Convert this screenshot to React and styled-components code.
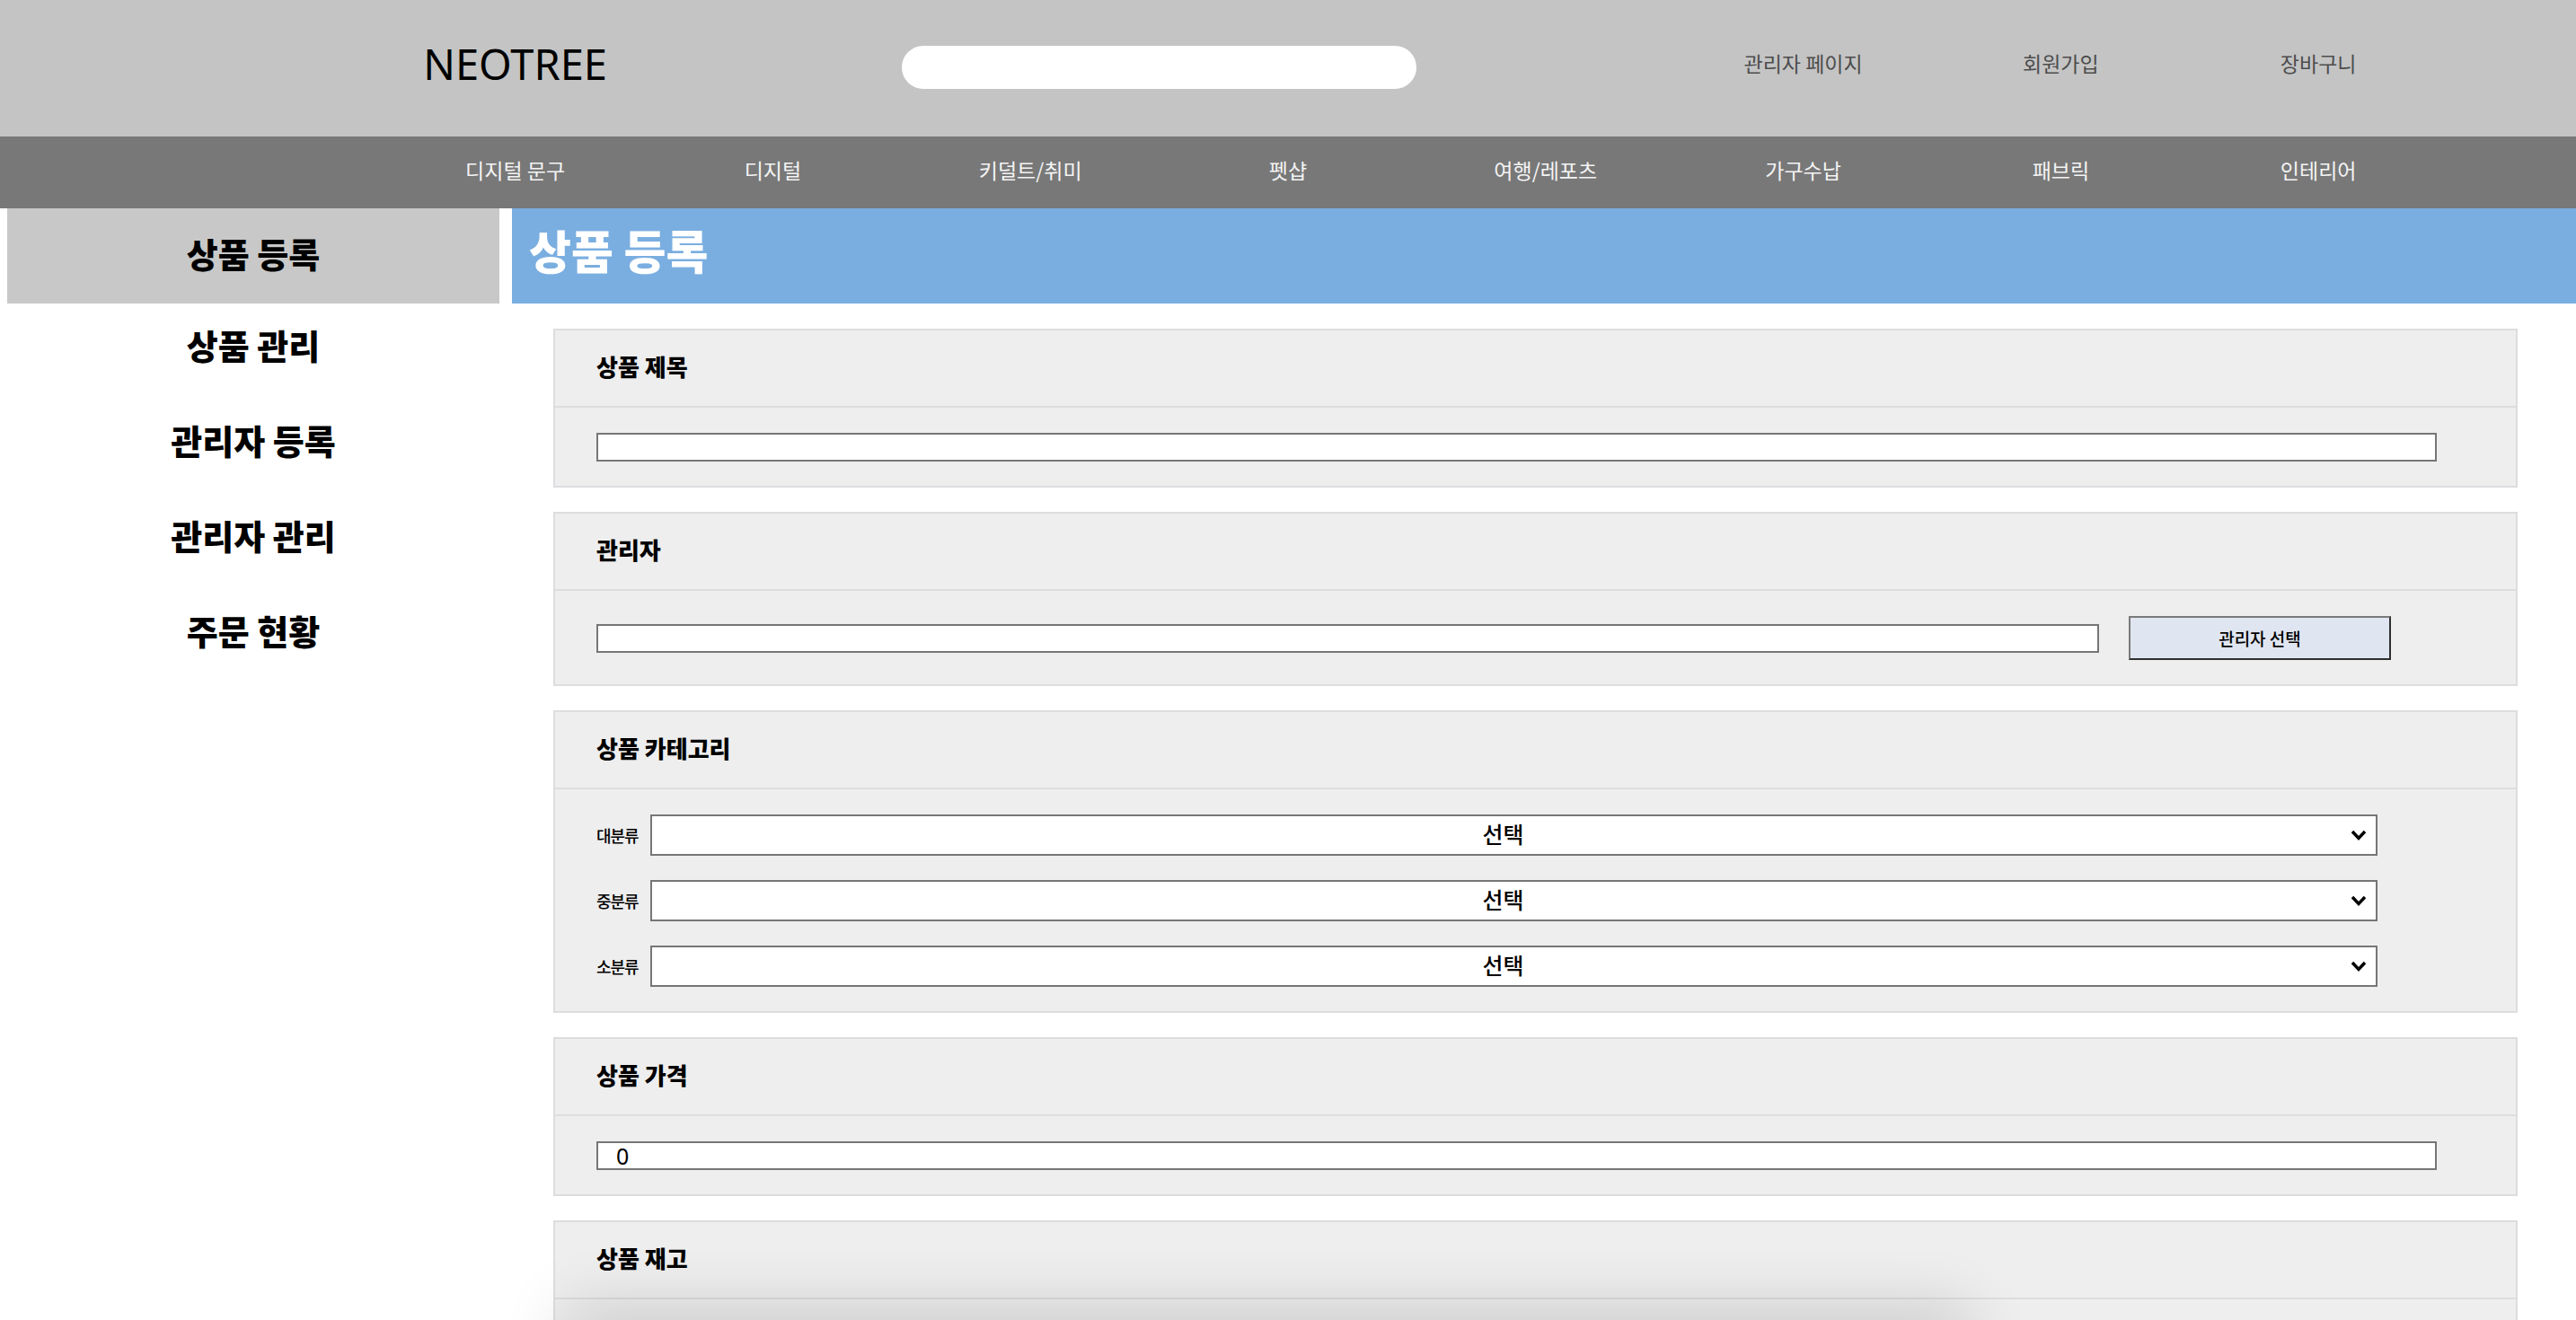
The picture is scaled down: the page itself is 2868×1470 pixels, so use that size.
import React from 'react'
import styled, { createGlobalStyle } from 'styled-components'

const GlobalStyle = createGlobalStyle`
  html, body {
    margin: 0;
    padding: 0;
    scrollbar-width: none;
  }
  body::-webkit-scrollbar {
    display: none;
  }
  body {
    font-family: "Noto Sans CJK KR", "Noto Sans", sans-serif;
    color: #000;
    background: #fff;
  }
  * {
    box-sizing: border-box;
  }
`;

const Header = styled.header`
  height: 152px;
  background: #c4c4c4;
  display: grid;
  grid-template-columns: 15% repeat(8, 10%);
  align-items: center;
`;

const Logo = styled.div`
  grid-column: 2;
  text-align: center;
  font-family: "Noto Sans", sans-serif;
  font-size: 47px;
  color: #000;
  margin-top: -10px;
`;

const Search = styled.input`
  grid-column: 4 / span 2;
  height: 48px;
  border: none;
  border-radius: 24px;
  background: #fff;
  outline: none;
  margin-top: -2px;
`;

const HeaderLink = styled.a`
  grid-column: ${props => props.col};
  text-align: center;
  font-size: 23px;
  color: #4d4d4d;
  text-decoration: none;
  margin-top: -12px;
`;

const Nav = styled.nav`
  height: 80px;
  background: #787878;
  display: grid;
  grid-template-columns: 15% repeat(8, 10%);
  align-items: center;
`;

const NavItem = styled.a`
  grid-column: ${props => props.col};
  text-align: center;
  font-size: 23px;
  color: #f4f4f4;
  text-decoration: none;
  margin-top: -6px;
`;

const Body = styled.div`
  display: flex;
  gap: 14px;
  padding-left: 8px;
`;

const Sidebar = styled.aside`
  width: 548px;
  flex-shrink: 0;
  display: flex;
  flex-direction: column;
`;

const SideItem = styled.a`
  height: 106px;
  display: flex;
  align-items: center;
  justify-content: center;
  font-size: 38px;
  font-weight: 800;
  color: #000;
  text-decoration: none;
  background: ${props => (props.active ? '#c8c8c8' : 'transparent')};
  padding-bottom: ${props => (props.active ? '8px' : '16px')};
`;

const Main = styled.main`
  flex: 1;
  min-width: 0;
`;

const TitleBar = styled.div`
  height: 106px;
  background: #7aaee0;
  display: flex;
  align-items: center;
  padding: 0 0 14px 19px;
`;

const Title = styled.h1`
  margin: 0;
  font-size: 51px;
  font-weight: 800;
  color: #fff;
`;

const Form = styled.form`
  display: flex;
  flex-direction: column;
  gap: 27px;
  padding: 28px 0 0 46px;
  width: 2233px;
`;

const Card = styled.section`
  background: #eeeeee;
  border: 2px solid #dddde0;
`;

const CardHead = styled.div`
  height: 86px;
  border-bottom: 2px solid #dddde0;
  display: flex;
  align-items: center;
  padding: 0 0 6px 46px;
  font-size: 26px;
  font-weight: 800;
`;

const CardBody = styled.div`
  display: flex;
  flex-direction: ${props => (props.column ? 'column' : 'row')};
  align-items: ${props => (props.column ? 'stretch' : 'center')};
  gap: ${props => props.gap || '0px'};
  padding: 28px ${props => props.right || '88px'} 27px 46px;
`;

const TextInput = styled.input`
  flex: 1;
  height: 32px;
  border: 2px solid #767676;
  background: #fff;
  padding: 0 20px;
  font-family: "Noto Sans", sans-serif;
  font-size: 25px;
  color: #000;
  outline: none;
`;

const PickButton = styled.button`
  width: 292px;
  height: 49px;
  margin-right: 51px;
  background: #e0e6f1;
  border: 2px solid;
  border-color: #7a7a7a #2e2e2e #2e2e2e #7a7a7a;
  font-family: "Noto Sans CJK KR", sans-serif;
  font-size: 19px;
  font-weight: 500;
  color: #000;
`;

const SelectRow = styled.div`
  display: flex;
  align-items: center;
  gap: 11px;
`;

const SelectLabel = styled.label`
  font-size: 18px;
  font-weight: 500;
  width: 49px;
  white-space: nowrap;
  letter-spacing: -1px;
`;

const SelectWrap = styled.div`
  position: relative;
  flex: 1;
`;

const Select = styled.select`
  width: 100%;
  height: 46px;
  appearance: none;
  border: 2px solid #767676;
  background: #fff;
  font-family: "Noto Sans CJK KR", sans-serif;
  font-size: 25px;
  font-weight: 500;
  color: #000;
  text-align: center;
  text-align-last: center;
  padding: 0 24px 4px 0;
  outline: none;
`;

const Chevron = styled.svg`
  position: absolute;
  right: 12px;
  top: 50%;
  transform: translateY(-50%);
  pointer-events: none;
`;

const BottomShade = styled.div`
  position: fixed;
  left: 640px;
  width: 1540px;
  bottom: -40px;
  height: 40px;
  box-shadow: 0 0 70px 12px rgba(0, 0, 0, 0.16);
  pointer-events: none;
`;

const navItems = ['디지털 문구', '디지털', '키덜트/취미', '펫샵', '여행/레포츠', '가구수납', '패브릭', '인테리어'];
const sideItems = ['상품 등록', '상품 관리', '관리자 등록', '관리자 관리', '주문 현황'];
const categories = ['대분류', '중분류', '소분류'];

const Section = ({ title, children, ...bodyProps }) => (
  <Card>
    <CardHead>{title}</CardHead>
    <CardBody {...bodyProps}>{children}</CardBody>
  </Card>
);

const App = () => {
  return (
    <>
      <GlobalStyle />
      <Header>
        <Logo>NEOTREE</Logo>
        <Search type="text" />
        <HeaderLink col={7}>관리자 페이지</HeaderLink>
        <HeaderLink col={8}>회원가입</HeaderLink>
        <HeaderLink col={9}>장바구니</HeaderLink>
      </Header>
      <Nav>
        {navItems.map((item, i) => (
          <NavItem key={item} col={i + 2}>{item}</NavItem>
        ))}
      </Nav>
      <Body>
        <Sidebar>
          {sideItems.map((item, i) => (
            <SideItem key={item} active={i === 0}>{item}</SideItem>
          ))}
        </Sidebar>
        <Main>
          <TitleBar>
            <Title>상품 등록</Title>
          </TitleBar>
          <Form onSubmit={e => e.preventDefault()}>
            <Section title="상품 제목">
              <TextInput type="text" />
            </Section>
            <Section title="관리자" gap="33px">
              <TextInput type="text" />
              <PickButton type="button">관리자 선택</PickButton>
            </Section>
            <Section title="상품 카테고리" column gap="27px" right="154px">
              {categories.map(label => (
                <SelectRow key={label}>
                  <SelectLabel>{label}</SelectLabel>
                  <SelectWrap>
                    <Select defaultValue="">
                      <option value="">선택</option>
                    </Select>
                    <Chevron width="18" height="12" viewBox="0 0 18 12">
                      <path d="M2 2 L9 9.5 L16 2" fill="none" stroke="#000" strokeWidth="3.4" />
                    </Chevron>
                  </SelectWrap>
                </SelectRow>
              ))}
            </Section>
            <Section title="상품 가격">
              <TextInput type="number" defaultValue={0} />
            </Section>
            <Section title="상품 재고">
              <TextInput type="number" defaultValue={0} />
            </Section>
          </Form>
        </Main>
      </Body>
      <BottomShade />
    </>
  );
}

export default App;
